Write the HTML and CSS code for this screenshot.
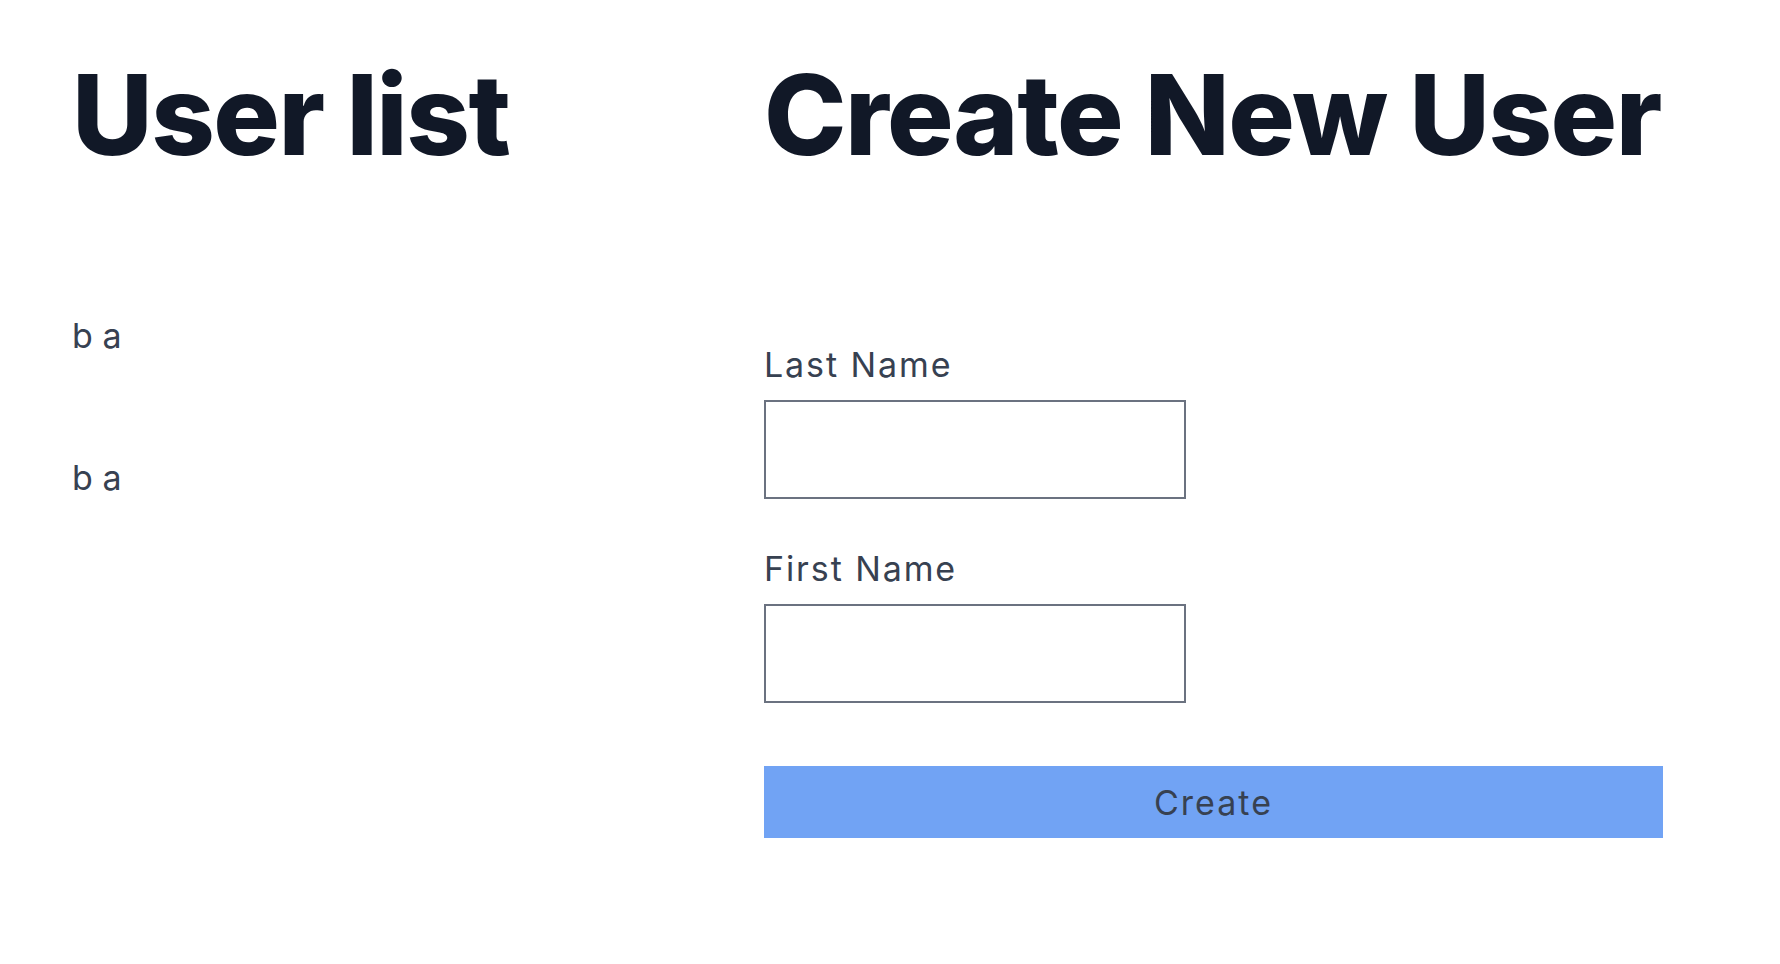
FILE: index.html
```html
<!DOCTYPE html>
<html lang="en">
<head>
<meta charset="utf-8">
<title>Users</title>
<link rel="stylesheet" href="styles.css">
</head>
<body>
<div class="page">
  <section class="col col-list">
    <h1 class="title">User list</h1>
    <ul class="users">
      <li class="user">b a</li>
      <li class="user">b a</li>
    </ul>
  </section>
  <section class="col col-form">
    <h1 class="title">Create New User</h1>
    <form class="form">
      <div class="field">
        <label class="label" for="lastName">Last Name</label>
        <input class="input" id="lastName" type="text">
      </div>
      <div class="field">
        <label class="label" for="firstName">First Name</label>
        <input class="input" id="firstName" type="text">
      </div>
      <button class="btn" type="button">Create</button>
    </form>
  </section>
</div>
</body>
</html>
```

FILE: styles.css
```css
html, body {
  margin: 0;
  padding: 0;
  background: #ffffff;
}
body {
  font-family: Inter, "Noto Sans", sans-serif;
  color: #374151;
}
.page {
  display: flex;
  padding: 59px 0 0 72px;
}
.col-list {
  width: 692px;
  flex: none;
}
.col-form {
  width: 899px;
  flex: none;
}
.title {
  margin: 0;
  font-size: 111px;
  line-height: 111px;
  font-weight: 800;
  color: #111827;
  white-space: nowrap;
  letter-spacing: -1.5px;
}
.users {
  list-style: none;
  margin: 146px 0 0;
  padding: 0;
}
.user {
  font-size: 34px;
  line-height: 40px;
  color: #374151;
  margin-bottom: 102px;
}
.form {
  margin-top: 175px;
  display: flex;
  flex-direction: column;
}
.field {
  display: flex;
  flex-direction: column;
  align-items: flex-start;
}
.field + .field {
  margin-top: 50px;
}
.label {
  font-size: 34px;
  line-height: 40px;
  letter-spacing: 1.9px;
  color: #374151;
  margin-bottom: 15px;
}
.input {
  box-sizing: border-box;
  width: 422px;
  height: 99px;
  margin: 0;
  border: 2px solid #6b7280;
  border-radius: 0;
  background: #ffffff;
  font: inherit;
  font-size: 34px;
  padding: 0 12px;
}
.btn {
  margin-top: 63px;
  width: 100%;
  height: 72px;
  border: none;
  border-radius: 0;
  background: #71a3f4;
  color: #374151;
  font-family: Inter, "Noto Sans", sans-serif;
  font-size: 34px;
  letter-spacing: 2px;
  padding: 0;
}
```
